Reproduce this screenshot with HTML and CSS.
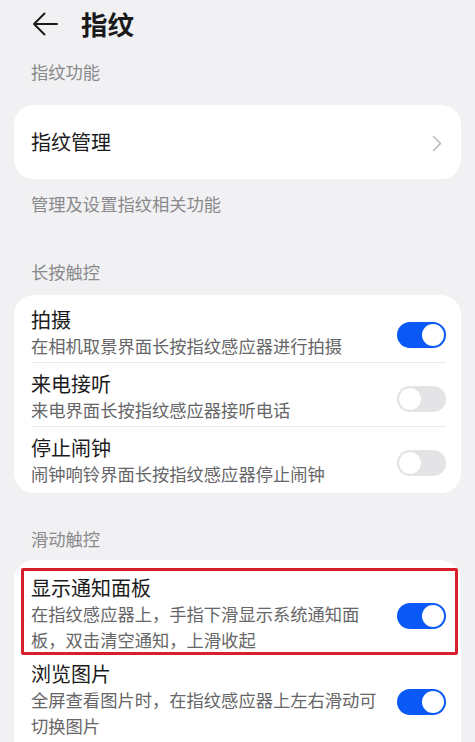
FILE: index.html
```html
<!DOCTYPE html>
<html lang="zh-CN">
<head>
<meta charset="utf-8">
<title>指纹</title>
<link rel="stylesheet" href="styles.css">
</head>
<body>
<div class="page">
  <header class="header">
    <svg class="back" width="26" height="24" viewBox="0 0 26 24" aria-hidden="true">
      <path d="M2 12H25M12.5 1.5L2 12L12.5 22.5" fill="none" stroke="#1b1b1b" stroke-width="1.9" stroke-linecap="round" stroke-linejoin="round"/>
    </svg>
    <h1 class="title">指纹</h1>
  </header>

  <div class="caption cap-1">指纹功能</div>
  <div class="card card-link">
    <span class="link-label">指纹管理</span>
    <svg class="chev" width="10" height="17" viewBox="0 0 10 17" aria-hidden="true">
      <path d="M1.5 1.5L8.5 8.5L1.5 15.5" fill="none" stroke="#bcbcbc" stroke-width="1.6" stroke-linecap="round" stroke-linejoin="round"/>
    </svg>
  </div>
  <div class="caption cap-2">管理及设置指纹相关功能</div>

  <div class="caption cap-3">长按触控</div>
  <div class="card card-list">
    <div class="row">
      <div class="row-inner divided">
        <div class="texts">
          <div class="row-title">拍摄</div>
          <div class="row-sub">在相机取景界面长按指纹感应器进行拍摄</div>
        </div>
        <span class="toggle on"><span class="knob"></span></span>
      </div>
    </div>
    <div class="row">
      <div class="row-inner divided">
        <div class="texts">
          <div class="row-title">来电接听</div>
          <div class="row-sub">来电界面长按指纹感应器接听电话</div>
        </div>
        <span class="toggle off"><span class="knob"></span></span>
      </div>
    </div>
    <div class="row">
      <div class="row-inner">
        <div class="texts">
          <div class="row-title">停止闹钟</div>
          <div class="row-sub">闹钟响铃界面长按指纹感应器停止闹钟</div>
        </div>
        <span class="toggle off"><span class="knob"></span></span>
      </div>
    </div>
  </div>

  <div class="caption cap-4">滑动触控</div>
  <div class="card card-list card-last">
    <div class="row row-marked">
      <div class="row-inner first-inner">
        <div class="texts">
          <div class="row-title">显示通知面板</div>
          <div class="row-sub">在指纹感应器上，手指下滑显示系统通知面板，双击清空通知，上滑收起</div>
        </div>
        <span class="toggle on"><span class="knob"></span></span>
      </div>
    </div>
    <div class="row">
      <div class="row-inner">
        <div class="texts">
          <div class="row-title">浏览图片</div>
          <div class="row-sub">全屏查看图片时，在指纹感应器上左右滑动可切换图片</div>
        </div>
        <span class="toggle on"><span class="knob"></span></span>
      </div>
    </div>
  </div>
</div>
</body>
</html>
```

FILE: styles.css
```css
html, body {
  margin: 0;
  padding: 0;
  background: #f1f1f3;
}

body {
  font-family: "Noto Sans CJK SC", "Noto Sans", "Liberation Sans", sans-serif;
  color: #1b1b1b;
  width: 475px;
  height: 742px;
  overflow: hidden;
}

.page {
  display: flex;
  flex-direction: column;
}

.header {
  height: 48px;
  display: flex;
  align-items: center;
  padding-left: 32px;
}

.back {
  display: block;
  flex: none;
}

.title {
  margin: 0 0 0 23px;
  font-size: 26.5px;
  line-height: 48px;
  font-weight: 700;
  color: #1a1a1a;
}

.caption {
  padding: 0 31px;
  font-size: 17.3px;
  line-height: 24px;
  color: #8a8a8c;
}

.cap-1 { margin-top: 12px; }
.cap-2 { margin-top: 13px; }
.cap-3 { margin-top: 44px; }
.cap-4 { margin-top: 34px; }

.card {
  margin: 0 14px;
  background: #ffffff;
  border-radius: 20px;
}

.card-link {
  margin-top: 21px;
  height: 74px;
  display: flex;
  align-items: center;
  justify-content: space-between;
  padding: 0 19px 0 17px;
}

.link-label {
  font-size: 20px;
  line-height: 26px;
  color: #1b1b1b;
}

.chev {
  display: block;
  margin-top: 2px;
}

.card-list {
  margin-top: 11px;
  padding: 4px 0 2px;
}

.card-last {
  margin-top: 9px;
  padding-bottom: 20px;
}

.row {
  padding: 0 15px 0 17px;
  position: relative;
}

.row-inner {
  display: flex;
  align-items: center;
  padding: 8px 0 4px;
  min-height: 52px;
}

.row-inner.divided {
  padding-bottom: 3px;
  border-bottom: 1px solid #e9e9ea;
}

.first-inner {
  padding-top: 11px;
  padding-bottom: 0;
}

.texts {
  flex: 1;
  min-width: 0;
}

.row-title {
  font-size: 20px;
  line-height: 26px;
  color: #1b1b1b;
}

.row-sub {
  font-size: 17.3px;
  line-height: 26px;
  color: #666668;
}

.toggle {
  flex: none;
  width: 49px;
  height: 26px;
  border-radius: 13px;
  margin-left: 16px;
  margin-top: 4px;
  position: relative;
  display: block;
}

.toggle.on { background: #0a59f7; }
.toggle.off { background: #e4e4e6; }

.knob {
  position: absolute;
  top: 2px;
  width: 22px;
  height: 22px;
  border-radius: 50%;
  background: #ffffff;
}

.toggle.on .knob { right: 2px; }
.toggle.off .knob { left: 2px; box-shadow: 0 0 1px rgba(0,0,0,0.08); }

.row-marked::after {
  content: "";
  position: absolute;
  top: 4px;
  bottom: -2px;
  left: 7px;
  right: 3px;
  border: 3px solid #d8202c;
  border-radius: 2px;
  pointer-events: none;
}
```
